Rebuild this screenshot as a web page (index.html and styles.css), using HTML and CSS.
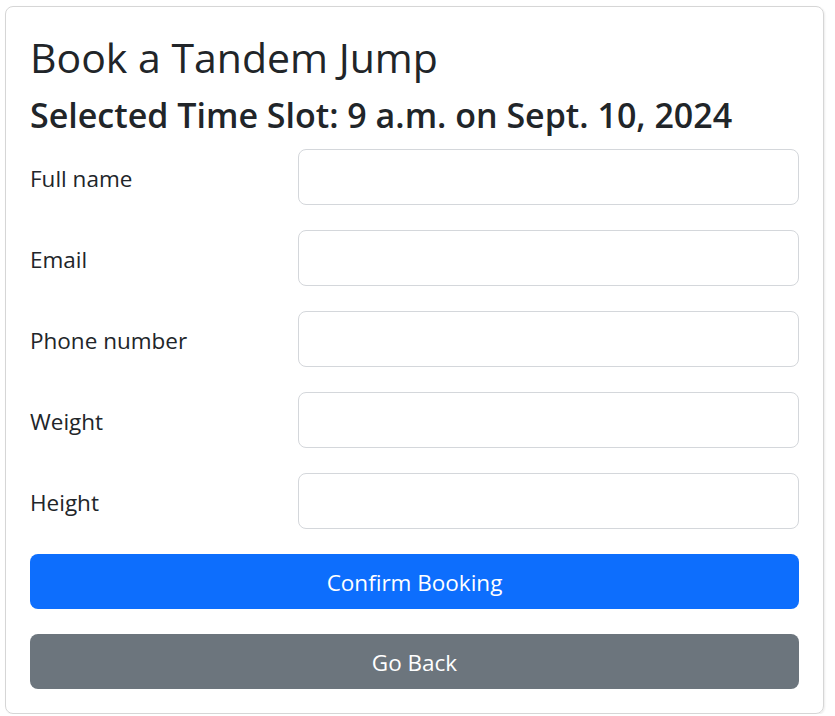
FILE: index.html
```html
<!DOCTYPE html>
<html lang="en">
<head>
<meta charset="utf-8">
<title>Book a Tandem Jump</title>
<link rel="stylesheet" href="styles.css">
</head>
<body>
<div class="card">
  <h1 class="title">Book a Tandem Jump</h1>
  <h2 class="subtitle">Selected Time Slot: 9 a.m. on Sept. 10, 2024</h2>
  <form class="form">
    <div class="row"><label class="label" for="name">Full name</label><input class="input" id="name" type="text"></div>
    <div class="row"><label class="label" for="email">Email</label><input class="input" id="email" type="email"></div>
    <div class="row"><label class="label" for="phone">Phone number</label><input class="input" id="phone" type="tel"></div>
    <div class="row"><label class="label" for="weight">Weight</label><input class="input" id="weight" type="text"></div>
    <div class="row"><label class="label" for="height">Height</label><input class="input" id="height" type="text"></div>
    <button class="btn btn-primary" type="button">Confirm Booking</button>
    <button class="btn btn-secondary" type="button">Go Back</button>
  </form>
</div>
</body>
</html>
```
FILE: styles.css
```css
html, body {
  margin: 0;
  padding: 0;
  background: #fff;
}
body {
  padding: 6px 11px 0 5px;
  font-family: "Open Sans", "Noto Sans", sans-serif;
  color: #212529;
}
.card {
  border: 1px solid #d6d6d6;
  border-radius: 8px;
  box-shadow: 1px 1px 2px rgba(0,0,0,0.08);
  padding: 24px 24px 23px 24px;
  height: 708px;
  box-sizing: border-box;
}
.title {
  margin: 3px 0 0 0;
  font-size: 41px;
  font-weight: 400;
  line-height: 46px;
}
.subtitle {
  margin: 12px 0 11px 0;
  font-size: 34px;
  font-weight: 600;
  line-height: 46px;
}
.form {
  display: flex;
  flex-direction: column;
  gap: 25px;
}
.row {
  display: grid;
  grid-template-columns: 268px 1fr;
  align-items: center;
}
.label {
  font-size: 22.5px;
  line-height: 1.5;
  padding-top: 4px;
}
.input {
  height: 56px;
  box-sizing: border-box;
  border: 1px solid #d4d7db;
  border-radius: 8px;
  background: #fff;
  margin: 0;
  font: inherit;
}
.btn {
  height: 55px;
  border: none;
  border-radius: 8px;
  font-family: inherit;
  font-size: 22.5px;
  line-height: 1.5;
  padding: 2px 0 0 0;
  color: #fff;
  margin: 0;
}
.btn-primary { background: #0d6efd; }
.btn-secondary { background: #6c757d; }
```
